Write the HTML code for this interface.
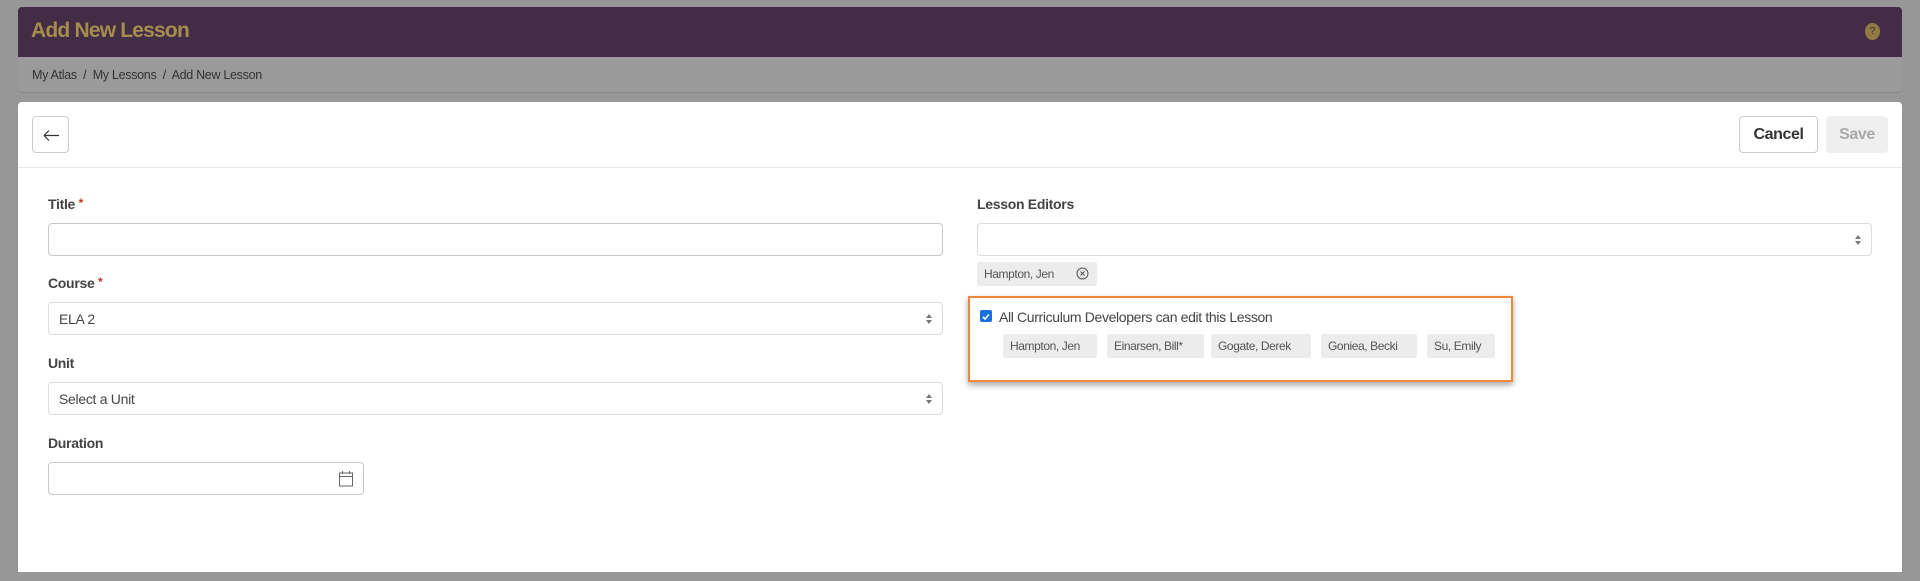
<!DOCTYPE html>
<html><head><style>
*{box-sizing:border-box;margin:0;padding:0}
body{width:1920px;height:581px;background:#979797;font-family:"Liberation Sans",sans-serif;color:#333;position:relative;overflow:hidden}
.a{position:absolute}
.hdr{left:18px;top:7px;width:1884px;height:50px;background:#432c45;border-radius:4px 4px 0 0}
.hdr h1{position:absolute;left:13px;top:12px;font-size:21px;font-weight:bold;color:#a48d4d;letter-spacing:-0.8px}
.help{right:22px;top:16px;width:15px;height:17px;border-radius:50%;background:#8f7c45;color:#3a2c30;font-size:10px;text-align:center;line-height:17px}
.bc{left:18px;top:57px;width:1884px;height:36px;background:#9a9a9a;border-bottom:1px solid #8a8a8a;font-size:12.5px;color:#333;padding:11px 14px;border-radius:0 0 4px 4px;letter-spacing:-0.3px}
.card{left:18px;top:102px;width:1884px;height:470px;background:#fff;border-radius:4px 4px 0 0}
.btn{border:1px solid #ccc;border-radius:4px;background:#fff}
.lbl{font-size:14px;font-weight:bold;color:#444;letter-spacing:-0.3px}
.req{color:#c0392b;font-size:12px;vertical-align:top}
.inp{border:1px solid #c8c8c8;border-radius:4px;height:33px;background:#fff;font-size:14px;color:#444;padding:8px 10px;letter-spacing:-0.3px}
.sel{border-color:#dcdcdc}
.arr{position:absolute;right:10px;top:10px;width:6px;height:12px}
.chip{background:#ececec;border-radius:2px;font-size:12px;color:#555;height:24px;line-height:24px;padding:0 7px;position:absolute;white-space:nowrap;letter-spacing:-0.4px;overflow:hidden}
</style></head><body>
<div class="a hdr"><h1>Add New Lesson</h1><div class="a help">?</div></div>
<div class="a bc">My Atlas &nbsp;/&nbsp; My Lessons &nbsp;/&nbsp; Add New Lesson</div>
<div class="a card"></div>
<div class="a btn" style="left:32px;top:116px;width:37px;height:37px"><svg width="37" height="37" viewBox="0 0 37 37"><path d="M11 18.5H26M11 18.5l5-5M11 18.5l5 5" stroke="#333" stroke-width="1.2" fill="none"/></svg></div>
<div class="a btn" style="left:1739px;top:116px;width:79px;height:37px;font-size:16px;font-weight:bold;color:#333;text-align:center;line-height:35px;letter-spacing:-0.4px">Cancel</div>
<div class="a" style="left:1826px;top:116px;width:62px;height:37px;background:#efefef;border-radius:4px;font-size:16px;font-weight:bold;color:#aaa;text-align:center;line-height:37px;letter-spacing:-0.4px">Save</div>
<div class="a" style="left:18px;top:167px;width:1884px;height:1px;background:#e6e6e6"></div>

<div class="a lbl" style="left:48px;top:196px">Title <span class="req">*</span></div>
<div class="a inp" style="left:48px;top:223px;width:895px"></div>
<div class="a lbl" style="left:48px;top:275px">Course <span class="req">*</span></div>
<div class="a inp sel" style="left:48px;top:302px;width:895px">ELA 2<svg class="arr" viewBox="0 0 6 12"><path d="M0 5L3 1 6 5zM0 7l3 4 3-4z" fill="#777"/></svg></div>
<div class="a lbl" style="left:48px;top:355px">Unit</div>
<div class="a inp sel" style="left:48px;top:382px;width:895px">Select a Unit<svg class="arr" viewBox="0 0 6 12"><path d="M0 5L3 1 6 5zM0 7l3 4 3-4z" fill="#777"/></svg></div>
<div class="a lbl" style="left:48px;top:435px">Duration</div>
<div class="a inp" style="left:48px;top:462px;width:316px"><svg class="a" style="right:9px;top:7px" width="16" height="17" viewBox="0 0 16 17"><rect x="1.5" y="3" width="13" height="13" fill="none" stroke="#666"/><path d="M1.5 6.5h13M4.5 1v3M11.5 1v3" stroke="#666"/></svg></div>

<div class="a lbl" style="left:977px;top:196px">Lesson Editors</div>
<div class="a inp sel" style="left:977px;top:223px;width:895px"><svg class="arr" viewBox="0 0 6 12"><path d="M0 5L3 1 6 5zM0 7l3 4 3-4z" fill="#777"/></svg></div>
<div class="chip" style="left:977px;top:262px;width:120px">Hampton, Jen <svg style="position:absolute;right:8px;top:5px" width="13" height="13" viewBox="0 0 13 13"><circle cx="6.5" cy="6.5" r="5.5" fill="none" stroke="#555"/><path d="M4.5 4.5l4 4M8.5 4.5l-4 4" stroke="#555"/></svg></div>
<div class="a" style="left:968px;top:296px;width:545px;height:86px;border:2px solid #f0873a;box-shadow:0 3px 6px rgba(0,0,0,.35)"></div>
<div class="a" style="left:980px;top:310px;width:12px;height:12px;background:#1a6fd8;border-radius:2px"><svg width="12" height="12" viewBox="0 0 12 12"><path d="M3 6l2 2 4-4.5" stroke="#fff" stroke-width="1.6" fill="none"/></svg></div>
<div class="a" style="left:999px;top:309px;font-size:14px;color:#444;letter-spacing:-0.35px">All Curriculum Developers can edit this Lesson</div>
<div class="chip" style="left:1003px;top:334px;width:94px">Hampton, Jen</div>
<div class="chip" style="left:1107px;top:334px;width:97px">Einarsen, Bill*</div>
<div class="chip" style="left:1211px;top:334px;width:100px">Gogate, Derek</div>
<div class="chip" style="left:1321px;top:334px;width:96px">Goniea, Becki</div>
<div class="chip" style="left:1427px;top:334px;width:68px">Su, Emily</div>
</body></html>
